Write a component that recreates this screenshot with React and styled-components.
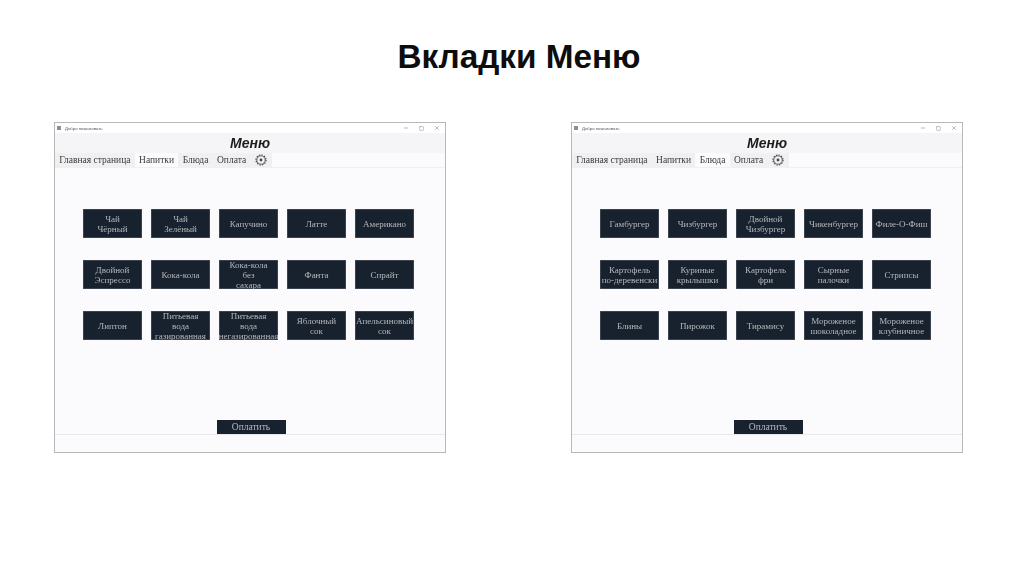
import React from "react";
import styled, { createGlobalStyle } from "styled-components";
import { Minus, Square, X } from "lucide-react";

const drinks = [
  "Чай\nЧёрный", "Чай\nЗелёный", "Капучино", "Латте", "Американо",
  "Двойной\nЭспрессо", "Кока-кола", "Кока-кола\nбез\nсахара", "Фанта", "Спрайт",
  "Липтон", "Питьевая\nвода\nгазированная", "Питьевая\nвода\nнегазированная", "Яблочный\nсок", "Апельсиновый\nсок",
];

const dishes = [
  "Гамбургер", "Чизбургер", "Двойной\nЧизбургер", "Чикенбургер", "Филе-О-Фиш",
  "Картофель\nпо-деревенски", "Куриные\nкрылышки", "Картофель\nфри", "Сырные\nпалочки", "Стрипсы",
  "Блины", "Пирожок", "Тирамису", "Мороженое\nшоколадное", "Мороженое\nклубничное",
];

const tabs = ["Главная страница", "Напитки", "Блюда", "Оплата"];

const GearIcon = () => (
  <svg width="12" height="12" viewBox="0 0 24 24" fill="none" stroke="#444444">
    <circle cx="12" cy="12" r="10" strokeDasharray="2.6 2.6" strokeWidth="2.4" />
    <circle cx="12" cy="12" r="8.4" fill="#f1f1f3" strokeWidth="1.6" />
    <circle cx="12" cy="12" r="2.8" fill="#444444" stroke="none" />
  </svg>
);

const Window = ({ active, items }) => (
  <Frame>
    <TitleBar>
      <AppIcon />
      <TitleText>Добро пожаловать</TitleText>
      <WinControls>
        <Minus size={6} />
        <Square size={5} />
        <X size={6} />
      </WinControls>
    </TitleBar>
    <MenuHeader>Меню</MenuHeader>
    <TabBar>
      {tabs.map((tab) => (
        <Tab key={tab} $active={tab === active}>
          {tab}
        </Tab>
      ))}
      <GearTab>
        <GearIcon />
      </GearTab>
    </TabBar>
    <Content>
      <Grid>
        {items.map((name) => (
          <ItemButton key={name}>{name}</ItemButton>
        ))}
      </Grid>
      <PayButton>Оплатить</PayButton>
    </Content>
    <Footer />
  </Frame>
);

const App = () => (
  <>
    <GlobalStyle />
    <Slide>
      <Heading>Вкладки Меню</Heading>
      <Windows>
        <Window active="Напитки" items={drinks} />
        <Window active="Блюда" items={dishes} />
      </Windows>
    </Slide>
  </>
);

export default App;

const GlobalStyle = createGlobalStyle`
  html, body {
    margin: 0;
    padding: 0;
    background: #ffffff;
  }
`;

const Slide = styled.div`
  width: 1024px;
  height: 574px;
  overflow: hidden;
  font-family: "Liberation Sans", Arial, sans-serif;
`;

const Heading = styled.h1`
  margin: 0;
  padding-top: 37px;
  padding-left: 14px;
  height: 122px;
  box-sizing: border-box;
  text-align: center;
  font-size: 33.3px;
  line-height: 40px;
  font-weight: 700;
  color: #0d0d0d;
`;

const Windows = styled.div`
  display: flex;
  gap: 125px;
  padding-left: 54px;
`;

const Frame = styled.div`
  width: 392px;
  height: 331px;
  box-sizing: border-box;
  border: 1px solid #b9b9b9;
  background: #fbfbfe;
  display: flex;
  flex-direction: column;
  filter: blur(0.3px);
`;

const TitleBar = styled.div`
  height: 10px;
  background: #ffffff;
  display: flex;
  align-items: center;
  padding: 0 5px 0 2px;
  gap: 4px;
`;

const AppIcon = styled.span`
  width: 4px;
  height: 4px;
  background: #8a9099;
`;

const TitleText = styled.span`
  font-size: 4.3px;
  color: #555555;
`;

const WinControls = styled.div`
  margin-left: auto;
  display: flex;
  align-items: center;
  gap: 10px;
  color: #777777;
`;

const MenuHeader = styled.div`
  height: 20px;
  background: #f5f5f7;
  text-align: center;
  font-size: 14px;
  line-height: 21px;
  font-weight: 700;
  font-style: italic;
  color: #1c1c1c;
`;

const TabBar = styled.div`
  height: 14px;
  display: flex;
  align-items: stretch;
  background: #fbfbfe;
  border-bottom: 1px solid #f0f0f2;
`;

const Tab = styled.div`
  padding: 0 4.3px;
  background: ${(p) => (p.$active ? "#fbfbfe" : "#f0f0f2")};
  font-family: "Liberation Serif", "Times New Roman", serif;
  font-size: 9.5px;
  line-height: 14px;
  color: #3a3a3a;
  white-space: nowrap;
`;

const GearTab = styled.div`
  width: 22px;
  background: #f0f0f2;
  display: flex;
  align-items: center;
  justify-content: center;
`;

const Content = styled.div`
  flex: 1;
  display: flex;
  flex-direction: column;
  align-items: center;
  padding-top: 41px;
  border-bottom: 1px solid #e8e8ec;
`;

const Grid = styled.div`
  display: grid;
  grid-template-columns: repeat(5, 59px);
  grid-auto-rows: 29px;
  column-gap: 9px;
  row-gap: 22px;
  margin-left: -3px;
`;

const ItemButton = styled.div`
  background: #18222e;
  color: #b4b7bc;
  font-family: "Liberation Serif", "Times New Roman", serif;
  font-size: 9px;
  line-height: 10px;
  white-space: pre-line;
  display: flex;
  align-items: center;
  justify-content: center;
  text-align: center;
  overflow: hidden;
  box-shadow: inset 0 0 0 0.5px #5a626c;
`;

const PayButton = styled.div`
  margin-top: auto;
  margin-left: 2px;
  width: 69px;
  height: 14px;
  background: #18222e;
  color: #b4b7bc;
  font-family: "Liberation Serif", "Times New Roman", serif;
  font-size: 9.5px;
  line-height: 14px;
  text-align: center;
`;

const Footer = styled.div`
  height: 17px;
  background: #fbfbfe;
`;
